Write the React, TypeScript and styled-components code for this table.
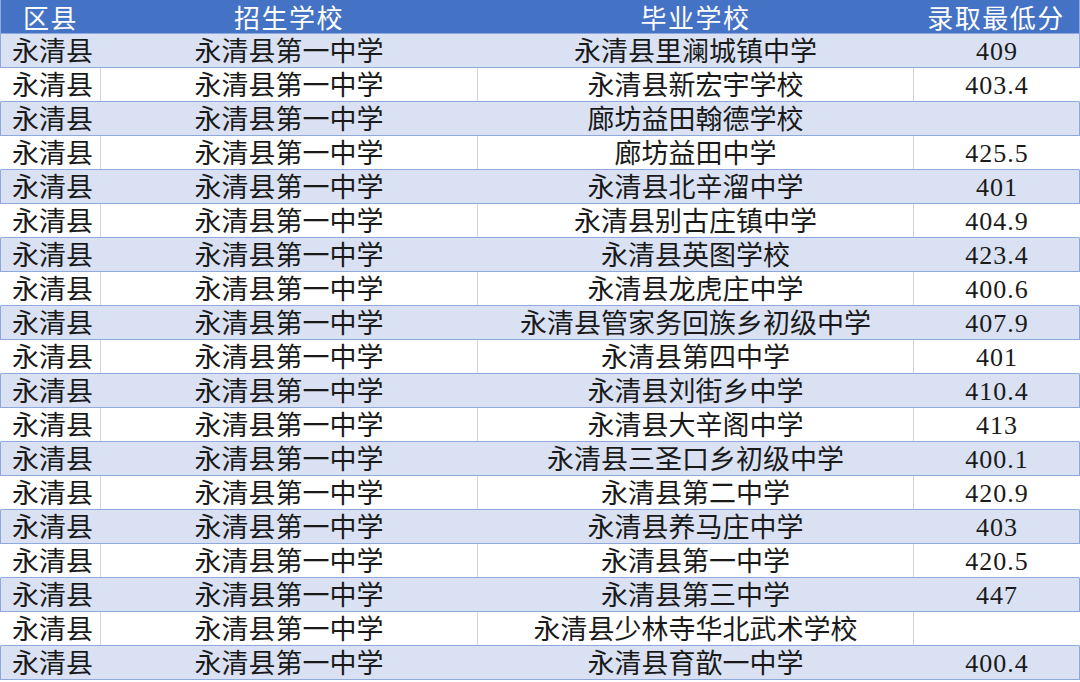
import React from 'react';
import styled, {createGlobalStyle} from 'styled-components';

const GlobalStyle = createGlobalStyle`
  html, body {
    margin: 0;
    padding: 0;
    background: #fff;
  }
`;

const rows: [string, string][] = [
  ['永清县里澜城镇中学', '409'],
  ['永清县新宏宇学校', '403.4'],
  ['廊坊益田翰德学校', ''],
  ['廊坊益田中学', '425.5'],
  ['永清县北辛溜中学', '401'],
  ['永清县别古庄镇中学', '404.9'],
  ['永清县英图学校', '423.4'],
  ['永清县龙虎庄中学', '400.6'],
  ['永清县管家务回族乡初级中学', '407.9'],
  ['永清县第四中学', '401'],
  ['永清县刘街乡中学', '410.4'],
  ['永清县大辛阁中学', '413'],
  ['永清县三圣口乡初级中学', '400.1'],
  ['永清县第二中学', '420.9'],
  ['永清县养马庄中学', '403'],
  ['永清县第一中学', '420.5'],
  ['永清县第三中学', '447'],
  ['永清县少林寺华北武术学校', ''],
  ['永清县育歆一中学', '400.4'],
];

const Table = styled.div`
  width: 1080px;
  font-family: 'Liberation Serif', 'Noto Sans CJK SC', serif;
  font-size: 27px;
  color: #1a1a1a;
`;

const Row = styled.div<{$variant: 'head' | 'blue' | 'white'}>`
  display: grid;
  grid-template-columns: 100px 377px 436px 1fr;
  height: 33px;
  border-bottom: 1px solid #8ea9db;
  border-left: 1px solid
    ${(p) => (p.$variant === 'white' ? '#ffffff' : '#8ea9db')};
  border-right: 1px solid
    ${(p) => (p.$variant === 'white' ? '#ffffff' : '#8ea9db')};
  background: ${(p) =>
    p.$variant === 'head'
      ? '#4472c4'
      : p.$variant === 'blue'
        ? '#d9e1f2'
        : '#ffffff'};
  color: ${(p) => (p.$variant === 'head' ? '#ffffff' : '#1a1a1a')};
`;

const Cell = styled.div<{$align?: 'left' | 'center'; $line?: boolean}>`
  display: flex;
  align-items: center;
  justify-content: ${(p) => (p.$align === 'left' ? 'flex-start' : 'center')};
  padding-left: ${(p) => (p.$align === 'left' ? '11px' : '0')};
  padding-top: 3px;
  border-right: 1px solid ${(p) => (p.$line ? '#d4d4d4' : 'transparent')};
  white-space: nowrap;
  line-height: 1;
`;

const HeadCell = styled(Cell)`
  font-family: 'Noto Sans CJK SC', sans-serif;
  font-size: 26px;
  letter-spacing: 1.5px;
  padding-top: 1px;
`;

const Score = styled(Cell)`
  font-size: 26px;
  letter-spacing: 1px;
  padding-left: 2px;
`;

export default function App() {
  return (
    <>
      <GlobalStyle />
      <Table>
        <Row $variant="head">
          <HeadCell>区县</HeadCell>
          <HeadCell>招生学校</HeadCell>
          <HeadCell>毕业学校</HeadCell>
          <HeadCell>录取最低分</HeadCell>
        </Row>
        {rows.map(([school, score], i) => {
          const white = i % 2 === 1;
          return (
            <Row key={i} $variant={white ? 'white' : 'blue'}>
              <Cell $align="left" $line={white}>
                永清县
              </Cell>
              <Cell $line={white}>永清县第一中学</Cell>
              <Cell $line={white}>{school}</Cell>
              <Score>{score}</Score>
            </Row>
          );
        })}
      </Table>
    </>
  );
}
